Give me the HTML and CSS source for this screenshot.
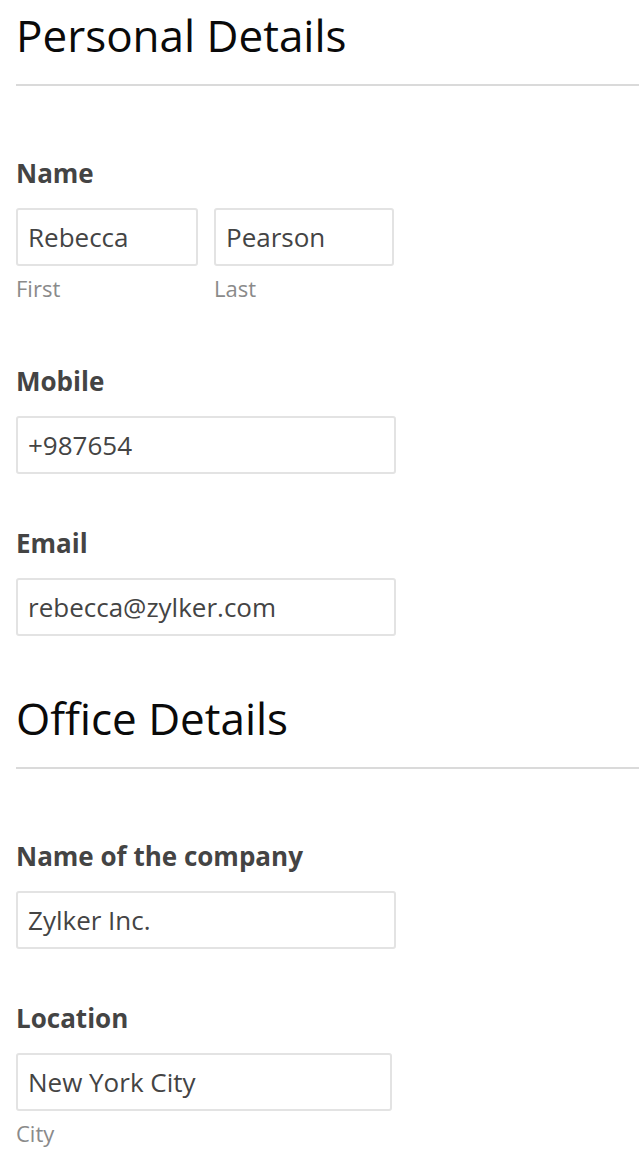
FILE: index.html
```html
<!DOCTYPE html>
<html lang="en">
<head>
<meta charset="utf-8">
<title>Details form</title>
<link rel="stylesheet" href="styles.css">
</head>
<body>
<form class="form">
  <section class="section">
    <h2 class="section-title">Personal Details</h2>
    <div class="divider"></div>

    <div class="field field-first">
      <div class="label">Name</div>
      <div class="row">
        <div class="sub">
          <div class="input input-first">Rebecca</div>
          <div class="hint">First</div>
        </div>
        <div class="sub">
          <div class="input input-last">Pearson</div>
          <div class="hint">Last</div>
        </div>
      </div>
    </div>

    <div class="field field-after-hint">
      <div class="label">Mobile</div>
      <div class="input input-wide">+987654</div>
    </div>

    <div class="field field-after-input">
      <div class="label">Email</div>
      <div class="input input-wide">rebecca@zylker.com</div>
    </div>
  </section>

  <section class="section section-office">
    <h2 class="section-title">Office Details</h2>
    <div class="divider"></div>

    <div class="field field-first">
      <div class="label">Name of the company</div>
      <div class="input input-wide">Zylker Inc.</div>
    </div>

    <div class="field field-after-input">
      <div class="label">Location</div>
      <div class="input input-city">New York City</div>
      <div class="hint">City</div>
    </div>
  </section>
</form>
</body>
</html>
```

FILE: styles.css
```css
html, body {
  margin: 0;
  padding: 0;
  background: #ffffff;
}

body {
  font-family: "Open Sans", "Noto Sans", sans-serif;
  color: #444444;
}

.form {
  padding: 9px 0 0 16px;
}

.section-title {
  margin: 0;
  font-size: 44px;
  line-height: 52px;
  font-weight: 400;
  color: #0a0a0a;
}

.section-office {
  margin-top: 56px;
}

.divider {
  height: 2px;
  margin-top: 23px;
  background: #dadada;
}

.field-first {
  margin-top: 70px;
}

.field-after-hint {
  margin-top: 61px;
}

.field-after-input {
  margin-top: 52px;
}

.label {
  font-size: 26px;
  line-height: 34px;
  font-weight: 700;
  color: #444444;
  margin-bottom: 18px;
}

.row {
  display: flex;
  gap: 16px;
}

.input {
  box-sizing: border-box;
  height: 58px;
  border: 2px solid #e3e3e3;
  border-radius: 3px;
  padding: 0 10px;
  display: flex;
  align-items: center;
  font-size: 26px;
  color: #444444;
  white-space: nowrap;
}

.input-first {
  width: 182px;
}

.input-last {
  width: 180px;
}

.input-wide {
  width: 380px;
}

.input-city {
  width: 376px;
}

.hint {
  margin-top: 7px;
  font-size: 22px;
  line-height: 30px;
  color: #8a8a8a;
}
```
